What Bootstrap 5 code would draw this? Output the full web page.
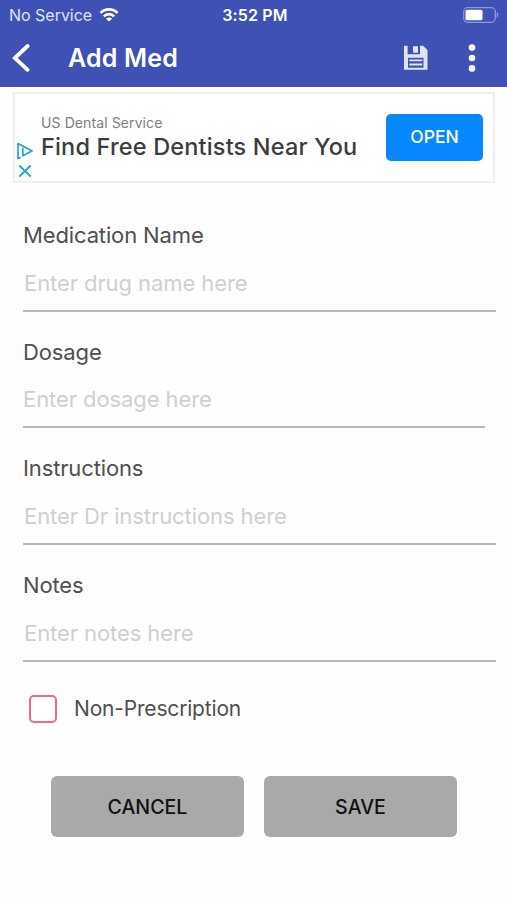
<!DOCTYPE html>
<html lang="en">
<head>
<meta charset="utf-8">
<meta name="viewport" content="width=device-width, initial-scale=1">
<title>Add Med</title>
<link href="https://cdn.jsdelivr.net/npm/bootstrap@5.3.0/dist/css/bootstrap.min.css" rel="stylesheet">
<style>
  body { font-family: Inter, "Liberation Sans", sans-serif; background: #fefefe; color: #4f4f4f; }
  .app-header { background: #3f51b5; height: 87px; color: #fff; }
  .status-bar { height: 30px; padding: 0 8px 0 9px; }
  .status-side { flex: 1 1 0; }
  .carrier { font-size: 16px; letter-spacing: -.02px; color: #dfe3f8; }
  .wifi { margin-left: 7px; }
  .clock { font-size: 16px; font-weight: 600; letter-spacing: .15px; margin-left: 2px; }
  .title-bar { height: 57px; padding: 0 31px 2px 12px; }
  .screen-title { font-size: 25px; font-weight: 600; letter-spacing: .2px; margin-left: 38px; line-height: 30px; }
  .menu-dots { margin-left: 40px; }
  .ad-banner { height: 91px; margin: 5px 12px 0 13px; border: 2px solid #efefef; background: #fff; padding: 0 10px 0 1px; }
  .ad-marks { width: 18px; height: 87px; padding-bottom: 3px; }
  .ad-copy { margin-left: 7px; }
  .ad-sponsor { font-size: 14px; line-height: 18px; letter-spacing: .1px; color: #808080; }
  .ad-headline { font-size: 23.5px; line-height: 30px; font-weight: 500; letter-spacing: .17px; color: #3c3c3f; }
  .ad-open { width: 97px; height: 47px; background: #0788ff; color: #fff; font-size: 17.5px; font-weight: 500; border-radius: 5px; }
  .med-form { padding: 12px 11px 0 23px; }
  .field { height: 116.67px; padding-top: 26px; }
  .field-short { margin-right: 11px; }
  .field-label { font-size: 22px; line-height: 29px; letter-spacing: -.13px; }
  .field-input { height: 61.67px; border-bottom: 2px solid #b9b9b9 !important; font-size: 22px; letter-spacing: -.08px; padding: 6px 0 0 1px; color: #4f4f4f; }
  .field-short .field-input { padding-left: 0; }
  .field-input::placeholder { color: #cfcfd1; opacity: 1; }
  .otc-row { padding: 33px 0 0 6px; }
  .otc-box { width: 28px; height: 28px; border: 2px solid #ef6793 !important; border-radius: 5px !important; }
  .otc-label { font-size: 21px; line-height: 28px; letter-spacing: -.18px; margin-left: 17px; }
  .actions { gap: 20px; padding: 53px 0 0 28px; }
  .action-btn { width: 193px; height: 61px; background: #a9a9a9; color: #111; font-size: 19.6px; font-weight: 500; border-radius: 6px; padding: 3px 0 0; }
</style>
</head>
<body>
<header class="app-header">
  <div class="status-bar d-flex align-items-center">
    <div class="status-side d-flex align-items-center">
      <span class="carrier">No Service</span>
      <svg class="wifi" width="20" height="16" viewBox="0 0 20 16" fill="none" stroke="#fff" stroke-width="2.6"><path d="M1.5 6C6.2 1.1 13.8 1.1 18.5 6M4.8 9.3c2.9-2.9 7.5-2.9 10.4 0"/><path d="M10 14.6 6.9 11.7c1.7-1.6 4.5-1.6 6.2 0z" fill="#fff" stroke="none"/></svg>
    </div>
    <span class="clock">3:52 PM</span>
    <div class="status-side d-flex justify-content-end">
      <svg width="36" height="16" viewBox="0 0 36 16"><rect x=".7" y=".7" width="31.6" height="14.6" rx="4" fill="none" stroke="#8e99d5" stroke-width="1.3"/><rect x="2.5" y="2.7" width="17" height="10.6" rx="1.5" fill="#fff"/><path d="M33.7 5.3v5.4c2.3-.9 2.3-4.5 0-5.4z" fill="#8e99d5"/></svg>
    </div>
  </div>
  <div class="title-bar d-flex align-items-center">
    <svg width="18" height="30" viewBox="0 0 18 30" fill="none" stroke="#fff" stroke-width="3.8" stroke-linecap="round"><path d="M15.6 3 2.8 15l12.8 11.8"/></svg>
    <h1 class="screen-title mb-0">Add Med</h1>
    <svg class="ms-auto" width="24" height="26" viewBox="0 0 24 26"><path fill="#dfe3f8" fill-rule="evenodd" d="M0 .7h3.6v8.5H16V.7h3L23.5 5v19.8H0zM4 12.7v10.1h15.5V12.7z"/><path fill="#dfe3f8" d="M9 1.2h5v6.6H9zM5.3 14.4h13v1.8h-13zm0 4.2h13v1.8h-13z"/></svg>
    <svg class="menu-dots" width="8" height="28" viewBox="0 0 8 28" fill="#fff"><circle cx="4" cy="3.6" r="3.3"/><circle cx="4" cy="14" r="3.3"/><circle cx="4" cy="24.4" r="3.3"/></svg>
  </div>
</header>

<main>
  <section class="ad-banner d-flex align-items-center">
    <div class="ad-marks d-flex flex-column justify-content-end align-items-center">
      <svg width="16" height="18" viewBox="0 0 16 18" fill="none" stroke="#20a7cb" stroke-width="1.7" stroke-linejoin="round"><path d="M3.8 15.3 1 16.6V1.6L15 9l-9.2 4.7V5.8"/></svg>
      <svg class="mt-1" width="14" height="14" viewBox="0 0 14 14" stroke="#20a7cb" stroke-width="1.8"><path d="m1.3 1.5 11.4 11M12.7 1.5l-11.4 11"/></svg>
    </div>
    <div class="ad-copy">
      <div class="ad-sponsor">US Dental Service</div>
      <div class="ad-headline text-nowrap">Find Free Dentists Near You</div>
    </div>
    <button type="button" class="btn ad-open ms-auto p-0">OPEN</button>
  </section>

  <form class="med-form">
    <div class="field">
      <label class="field-label d-block" for="med-name">Medication Name</label>
      <input id="med-name" class="field-input d-block w-100 border-0 bg-transparent" placeholder="Enter drug name here">
    </div>
    <div class="field field-short">
      <label class="field-label d-block" for="dosage">Dosage</label>
      <input id="dosage" class="field-input d-block w-100 border-0 bg-transparent" placeholder="Enter dosage here">
    </div>
    <div class="field">
      <label class="field-label d-block" for="instructions">Instructions</label>
      <input id="instructions" class="field-input d-block w-100 border-0 bg-transparent" placeholder="Enter Dr instructions here">
    </div>
    <div class="field">
      <label class="field-label d-block" for="notes">Notes</label>
      <input id="notes" class="field-input d-block w-100 border-0 bg-transparent" placeholder="Enter notes here">
    </div>
    <div class="otc-row d-flex align-items-center">
      <input type="checkbox" id="otc" class="form-check-input otc-box m-0">
      <label class="otc-label" for="otc">Non-Prescription</label>
    </div>
    <div class="actions d-flex">
      <button type="button" class="btn action-btn">CANCEL</button>
      <button type="button" class="btn action-btn">SAVE</button>
    </div>
  </form>
</main>
<script src="https://cdn.jsdelivr.net/npm/bootstrap@5.3.0/dist/js/bootstrap.bundle.min.js"></script>
</body>
</html>
